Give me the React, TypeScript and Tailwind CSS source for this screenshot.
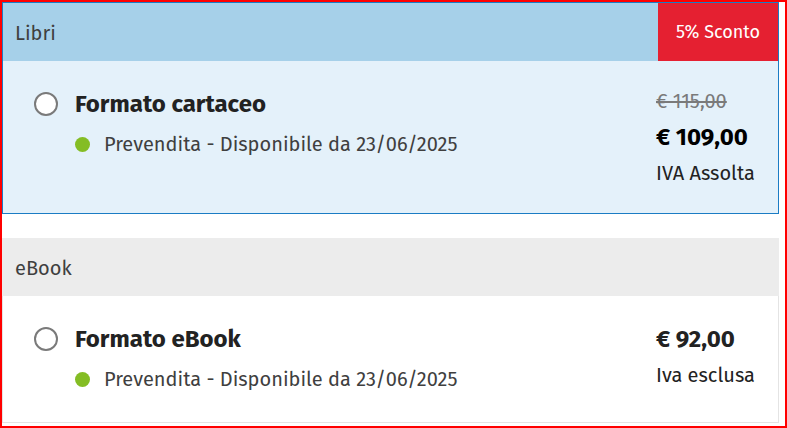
import React from "react";

const font = { fontFamily: '"Fira Sans", "Open Sans", "Noto Sans", sans-serif' };

function Radio() {
  return <div className="w-[24px] h-[24px] rounded-full border-2 border-[#7a7a7a] bg-white shrink-0" />;
}

function Status() {
  return (
    <div className="flex items-center h-[26px]">
      <div className="w-[15px] h-[15px] rounded-full bg-[#84bd24] ml-[41px] mr-[14px]" />
      <span className="text-[20px] leading-[26px] text-[#3f3f3f]">Prevendita - Disponibile da 23/06/2025</span>
    </div>
  );
}

export default function App() {
  return (
    <div className="w-[787px] h-[428px] border-2 border-[#ff0000] bg-white text-[#222]" style={font}>
      <div className="w-[777px] border border-[#1b7cc4]">
        <div className="h-[58px] bg-[#a6d0e9] flex items-stretch justify-between">
          <div className="pl-[12px] pt-[1px] flex items-center text-[20px] text-[#3f3f3f]">Libri</div>
          <div className="w-[120px] bg-[#e52031] flex items-center justify-center text-white text-[18px]">5% Sconto</div>
        </div>
        <div className="h-[152px] bg-[#e4f1fa] flex">
          <div className="flex-1 pl-[31px] pt-[28px]">
            <div className="flex items-center h-[30px] gap-[17px]">
              <Radio />
              <span className="text-[24px] font-bold leading-[30px]">Formato cartaceo</span>
            </div>
            <div className="mt-[12px]">
              <Status />
            </div>
          </div>
          <div className="w-[122px] pt-[27px] flex flex-col">
            <div className="text-[20px] leading-[26px] text-[#7a7a7a] line-through">€ 115,00</div>
            <div className="mt-[8px] text-[24px] leading-[30px] font-bold text-black">€ 109,00</div>
            <div className="mt-[8px] text-[20px] leading-[26px] text-[#222]">IVA Assolta</div>
          </div>
        </div>
      </div>
      <div className="w-[777px] mt-[24px]">
        <div className="h-[58px] bg-[#ececec] flex items-center pl-[13px] pt-[1px] text-[20px] text-[#3f3f3f]">eBook</div>
        <div className="h-[127px] bg-white border border-t-0 border-[#e4e4e4] flex">
          <div className="flex-1 pl-[31px] pt-[28px]">
            <div className="flex items-center h-[30px] gap-[17px]">
              <Radio />
              <span className="text-[24px] font-bold leading-[30px]">Formato eBook</span>
            </div>
            <div className="mt-[12px]">
              <Status />
            </div>
          </div>
          <div className="w-[122px] pt-[28px] flex flex-col">
            <div className="text-[24px] leading-[30px] font-bold text-[#222]">€ 92,00</div>
            <div className="mt-[8px] text-[20px] leading-[26px] text-[#222]">Iva esclusa</div>
          </div>
        </div>
      </div>
    </div>
  );
}
